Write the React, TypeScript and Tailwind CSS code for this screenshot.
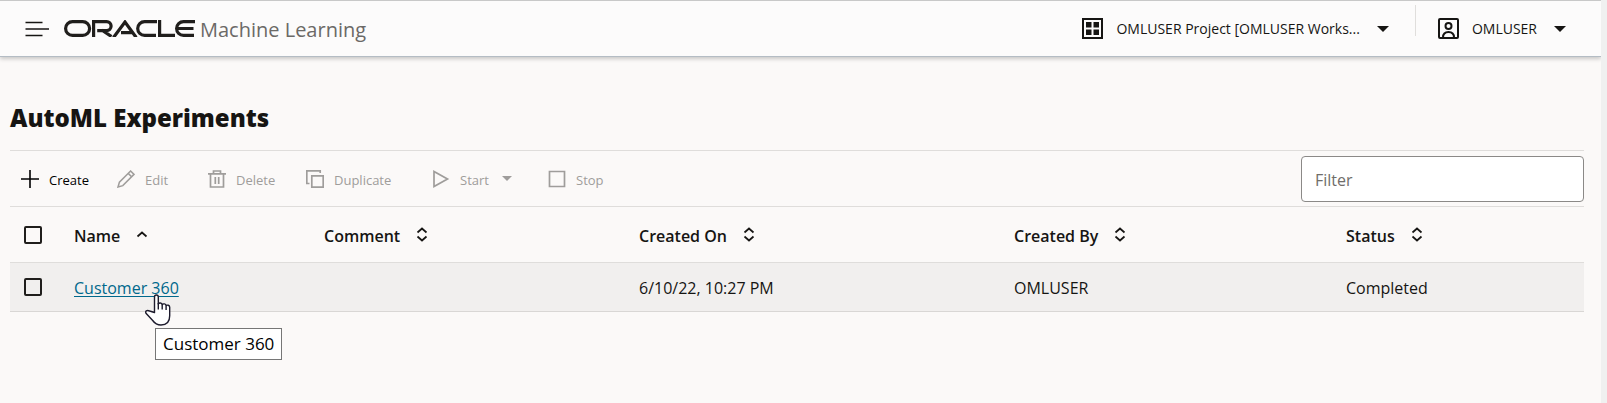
import React from "react";

const Caret = ({ size = "h-[6px] w-[12px]" }: { size?: string }) => (
  <svg viewBox="0 0 12 6" className={`shrink-0 ${size}`} fill="currentColor" aria-hidden="true">
    <path d="M0 0h12L6 6z" />
  </svg>
);

const OracleLogo = () => (
  <svg viewBox="0 0 131 17" className="h-[17px] w-[131px] shrink-0" fill="none" stroke="#201e1c" strokeWidth="3.2" role="img" aria-label="Oracle">
    <rect x="1.6" y="1.6" width="24" height="13.8" rx="6.9" />
    <path d="M29.600 17V1.600h13a4.500 4.500 0 0 1 0 9H33.200M38 10.200l9.500 6.300" />
    <path d="M49.500 17.500L61 2l11.200 15.500M57 12.600h11" />
    <path d="M93 1.600H80.600a6.900 6.900 0 0 0 0 13.800H92" />
    <path d="M95.600 0v15.400h15.400" />
    <path d="M131 1.600h-11.500a6.900 6.900 0 0 0 0 13.800H130M113 8.500h16.500" />
  </svg>
);

const GridIcon = () => (
  <svg viewBox="0 0 21 21" className="h-[21px] w-[21px] shrink-0" fill="#161513" aria-hidden="true">
    <path fillRule="evenodd" d="M0 0h21v21H0zM2 2v17h17V2z" />
    <path d="M4 4h5.500v5.500H4zM11.500 4H17v5.500h-5.500zM4 11.500h5.500V17H4zM11.500 11.500H17V17h-5.500z" />
  </svg>
);

const UserIcon = () => (
  <svg viewBox="0 0 21 21" className="h-[21px] w-[21px] shrink-0" fill="none" stroke="#161513" strokeWidth="2" aria-hidden="true">
    <rect x="1" y="1" width="19" height="19" rx="1" />
    <circle cx="10.500" cy="8" r="3" />
    <path d="M5 19.500c0-3.500 2.200-5.500 5.500-5.500s5.500 2 5.500 5.500" />
  </svg>
);

const iconClass = "h-[18px] w-[18px] shrink-0";

const PlusIcon = () => (
  <svg viewBox="0 0 18 18" className={iconClass} stroke="currentColor" strokeWidth="1.600" aria-hidden="true">
    <path d="M9 0v18M0 9h18" />
  </svg>
);
const PencilIcon = () => (
  <svg viewBox="0 0 18 18" className={iconClass} fill="none" stroke="currentColor" strokeWidth="1.500" aria-hidden="true">
    <path d="M1 17l1.400-4.800L13.600 1l3.400 3.400L5.800 15.600zM11.200 3.400l3.400 3.400" />
  </svg>
);
const TrashIcon = () => (
  <svg viewBox="0 0 18 18" className={iconClass} fill="none" stroke="currentColor" strokeWidth="1.700" aria-hidden="true">
    <path d="M0 3.800h18M5.500 3.800V1h7v2.800M2.500 3.800V17h13V3.800M7.300 7v7M10.700 7v7" />
  </svg>
);
const CopyIcon = () => (
  <svg viewBox="0 0 18 18" className={iconClass} fill="none" stroke="currentColor" strokeWidth="1.700" aria-hidden="true">
    <path d="M3.500 13.500H.8V.8h13.400V3M5.800 5.800h11.400v11.400H5.800z" />
  </svg>
);
const PlayIcon = () => (
  <svg viewBox="0 0 18 18" className={iconClass} fill="none" stroke="currentColor" strokeWidth="1.700" aria-hidden="true">
    <path d="M2 1.500v15L15.500 9z" />
  </svg>
);
const StopIcon = () => (
  <svg viewBox="0 0 18 18" className={iconClass} fill="none" stroke="currentColor" strokeWidth="1.700" aria-hidden="true">
    <path d="M1.500 1.500h15v15h-15z" />
  </svg>
);

const SortIcon = ({ ascending = false }: { ascending?: boolean }) => (
  <svg viewBox="0 0 12 16" className="h-[16px] w-[12px]" fill="none" stroke="currentColor" strokeWidth="1.700" aria-hidden="true">
    {ascending ? <path d="M1.500 9.500L6 5.500l4.500 4" /> : <path d="M1.500 5.500L6 1.500l4.500 4M1.500 9.500l4.500 4 4.500-4" />}
  </svg>
);

const Tool = ({ icon, label, className, disabled = true, caret = false }: { icon: React.ReactNode; label: string; className: string; disabled?: boolean; caret?: boolean }) => (
  <button type="button" disabled={disabled} className={`flex items-center gap-[10px] text-left text-[13px] font-medium leading-5 text-black disabled:text-[#9f9d9b] ${className}`}>
    {icon}
    <span className="pt-[2px]">{label}</span>
    {caret && (
      <span className="pl-[3px]">
        <Caret size="h-[5px] w-[10px]" />
      </span>
    )}
  </button>
);

const columns = [
  { label: "Name", width: "w-[250px]", ascending: true },
  { label: "Comment", width: "w-[315px]" },
  { label: "Created On", width: "w-[375px]" },
  { label: "Created By", width: "w-[332px]" },
  { label: "Status", width: "" },
];

const Check = ({ label }: { label: string }) => (
  <input type="checkbox" aria-label={label} className="block h-[18px] w-[18px] appearance-none rounded-[2px] border-2 border-[#201e1c] bg-transparent checked:bg-[#201e1c]" />
);

export default function App() {
  return (
    <div className="flex min-h-screen bg-[#f0f0f0] font-['Open_Sans',sans-serif] text-[#161513]">
      <div className="min-w-0 flex-1 bg-[#fbf9f8]">
        <header className="flex h-[57px] items-center border-t border-b border-t-[#c8c8c8] border-b-[#b4bcc4] bg-[#fcfbfb] pl-[25px] pr-[35px] shadow-[0_2px_4px_rgba(0,0,0,0.2)]">
          <button type="button" aria-label="Menu" className="mr-[15px]">
            <svg viewBox="0 0 24 16" className="h-[16px] w-[24px]" stroke="#161513" strokeWidth="1.700" aria-hidden="true">
              <path d="M.5 1.500h17M.5 8H24M.5 14.500h17" />
            </svg>
          </button>
          <OracleLogo />
          <span className="ml-[5px] pt-[2px] text-[20px] leading-7 text-[#6b6966]">Machine Learning</span>
          <button type="button" className="ml-auto flex items-center text-[14px] font-medium">
            <GridIcon />
            <span className="ml-[13px] mr-[17px]">OMLUSER Project [OMLUSER Works...</span>
            <Caret />
          </button>
          <div className="ml-[26px] mr-[22px] mt-[4px] h-[31px] w-px self-start bg-[#e0dedc]" />
          <button type="button" className="flex items-center text-[14px] font-medium">
            <UserIcon />
            <span className="ml-[13px] mr-[17px]">OMLUSER</span>
            <Caret />
          </button>
        </header>

        <main className="pl-[10px] pr-[17px] pt-[43px]">
          <h1 className="pb-[14px] text-[24px] font-extrabold leading-9">AutoML Experiments</h1>

          <div className="flex h-[56px] items-center border-t border-[#dfdddb] pl-[11px]">
            <Tool icon={<PlusIcon />} label="Create" disabled={false} className="w-[96px]" />
            <Tool icon={<PencilIcon />} label="Edit" className="w-[91px]" />
            <Tool icon={<TrashIcon />} label="Delete" className="w-[98px]" />
            <Tool icon={<CopyIcon />} label="Duplicate" className="w-[126px]" />
            <Tool icon={<PlayIcon />} label="Start" caret className="w-[116px]" />
            <Tool icon={<StopIcon />} label="Stop" className="" />
            <input type="text" aria-label="Filter" placeholder="Filter" className="ml-auto h-[46px] w-[283px] rounded-[4px] border border-[#8b8987] bg-white px-[13px] pt-[2px] text-[16px] placeholder:text-[#6f6d6a]" />
          </div>

          <table className="w-full table-fixed border-collapse text-left text-[16px]">
            <thead>
              <tr className="h-[56px] border-y border-[#dfdddb]">
                <th className="w-[64px] pl-[14px]"><Check label="Select all" /></th>
                {columns.map((c) => (
                  <th key={c.label} className={`font-semibold ${c.width}`}>
                    <button type="button" className="flex items-center gap-[16px]">
                      <span className="pt-[2px]">{c.label}</span>
                      <SortIcon ascending={c.ascending} />
                    </button>
                  </th>
                ))}
              </tr>
            </thead>
            <tbody>
              <tr className="h-[49px] border-b border-[#d9d7d5] bg-[#f1efee]">
                <td className="pl-[14px]"><Check label="Select Customer 360" /></td>
                <td className="pt-[2px]">
                  <div className="relative w-max">
                    <a href="#customer-360" className="text-[#00688c] underline underline-offset-2">Customer 360</a>
                    <svg viewBox="0 0 26 32" className="absolute left-[71px] top-[18px] h-[32px] w-[26px]" fill="#fff" stroke="#1c1a2c" strokeWidth="1.400" strokeLinejoin="round" aria-hidden="true">
                      <path d="M9.500 18.500V3c0-2.600 3.800-2.600 3.800 0v7c.6-1.500 3.600-1.400 3.900.6.900-1.200 3.600-.9 3.900.9 1.100-.8 3.600-.4 3.600 1.700v8.600c0 6-3.200 9.200-8.700 9.200-4 0-6.300-1.600-8.300-4.500L1.200 19.600c-1.700-2.800 1-3.800 3.400-2.600z" />
                      <path d="M13.300 9v6.500M17.200 10.600v5M21.100 11.500v4.500" fill="none" />
                    </svg>
                    <div role="tooltip" className="absolute left-[81px] top-[52px] flex h-[32px] w-max items-center border border-[#767676] bg-white px-[7px] text-[17px] text-black">Customer 360</div>
                  </div>
                </td>
                <td />
                <td className="pt-[2px]">6/10/22, 10:27 PM</td>
                <td className="pt-[2px]">OMLUSER</td>
                <td className="pt-[2px]">Completed</td>
              </tr>
            </tbody>
          </table>
        </main>
      </div>
      <div className="w-[6px] shrink-0 bg-[#f0f0f0]" />
    </div>
  );
}
